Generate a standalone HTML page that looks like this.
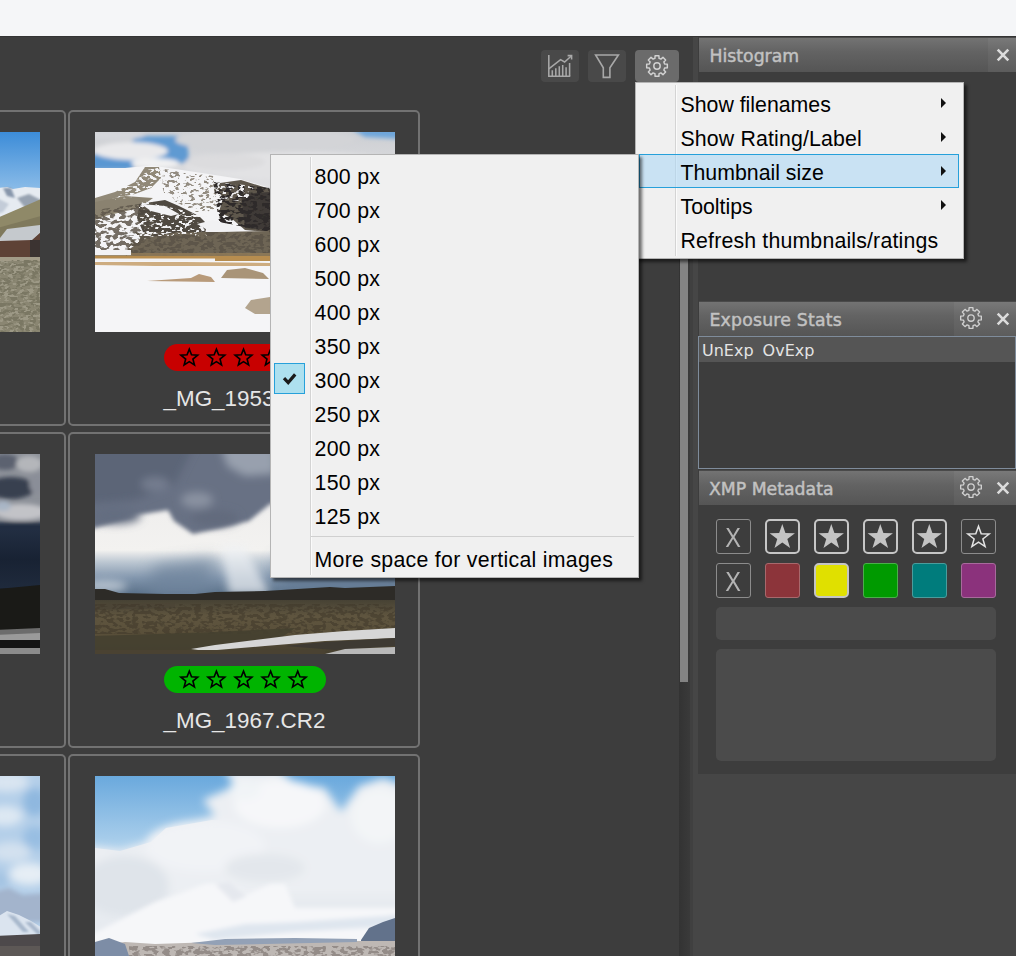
<!DOCTYPE html><html><head><meta charset="utf-8"><title>Thumbnail grid</title><style>html,body{margin:0;padding:0}
body{width:1016px;height:956px;overflow:hidden;background:#3d3d3d;position:relative;font-family:"Liberation Sans",sans-serif}
.abs{position:absolute}
.topbar{left:0;top:0;width:1016px;height:36px;background:#f5f6f8}
.cell{position:absolute;width:348px;height:312px;border:2px solid #727272;border-radius:5px}
.photo{width:300px;height:200px;overflow:hidden}
.photo svg{display:block}
.fname{font-size:22.4px;line-height:26px;color:#e6e6e6;white-space:nowrap;width:164px;text-align:center}
.tbtn{height:32px;border-radius:4px;background:#494949}
.tbtn.on{background:#6b6b6b}
.pbody{background:#3d3d3d}
.phead{background:linear-gradient(180deg,#737373 0%,#636363 40%,#555 100%);border-top:1px solid #4a4a4a;box-sizing:border-box}
.ptitle{position:absolute;top:7.7px;font-family:"DejaVu Sans","Liberation Sans",sans-serif;font-size:17.3px;line-height:20px;color:#c2c2c2;-webkit-text-stroke:0.45px #c2c2c2;white-space:nowrap}
.listbox{box-sizing:border-box;border:1px solid #7f8c9b;background:#3d3d3d}
.lhead{height:24.5px;background:#555;font-family:"DejaVu Sans","Liberation Sans",sans-serif;font-size:16px;line-height:28.5px;color:#e4e4e4;padding-left:3px;overflow:hidden;white-space:nowrap}
.xbtn,.sbtn,.cbtn{width:35px;height:35px;box-sizing:border-box;border-radius:3px}
.xbtn{border:1px solid #8c8c8c;text-align:center}
.xbtn span{display:inline-block;font-size:27px;line-height:35px;color:#b4b4b4;transform:scaleX(0.87);position:relative;top:1px}
.sbtn{border:1px solid #8c8c8c}
.sbtn.sel{border:2px solid #c6c6c6;border-radius:5px}
.cbtn{border:1px solid #888}
.cbtn.csel{border:2px solid #c4c4c4;border-radius:5px}
.field{background:#4b4b4b;border-radius:5px}
.menu{background:#f0f0f0;box-shadow:inset 0 0 0 1px #b4b4b4,3px 3px 3px rgba(0,0,0,.55);font-size:21.3px;color:#000;box-sizing:border-box}
.menu .gutter{position:absolute;width:1px;background:#d4d4d4;border-right:1px solid #fbfbfb}
.menu .mi{position:absolute;line-height:34px;height:34px;white-space:nowrap}
.menu .hl{position:absolute;box-sizing:border-box;background:rgba(170,215,245,.55);border:1px solid #26a0da}
.menu .arr{position:absolute;width:0;height:0;border-left:5.5px solid #111;border-top:5px solid transparent;border-bottom:5px solid transparent}
.menu .chk{position:absolute;width:31px;height:31px;box-sizing:border-box;background:#ade0ef;border:1px solid #26a0da}
.menu .chk svg{position:absolute;left:-1px;top:-1px}
.menu .sep{position:absolute;height:1px;background:#d0d0d0}
.hseg{background:rgba(255,255,255,.045)}
</style></head><body>
<div class="abs topbar"></div><div class="abs" style="left:0;top:36px;width:1016px;height:1px;background:#343434"></div>
<div class="cell" style="left:-286px;top:110px"></div><div class="abs photo" style="left:-260px;top:132px"><svg width="300" height="200" viewBox="0 0 300 200"><defs>
<filter id="p11b1" x="-10%" y="-10%" width="120%" height="120%"><feGaussianBlur stdDeviation="1"/></filter>
<filter id="p11b2" x="-10%" y="-10%" width="120%" height="120%"><feGaussianBlur stdDeviation="2.2"/></filter>
<filter id="p11b4" x="-20%" y="-20%" width="140%" height="140%"><feGaussianBlur stdDeviation="4"/></filter>
<filter id="p11b8" x="-30%" y="-30%" width="160%" height="160%"><feGaussianBlur stdDeviation="8"/></filter>

<filter id="p11sp" x="0" y="0" width="300" height="200" filterUnits="userSpaceOnUse"><feTurbulence type="fractalNoise" baseFrequency="0.16 0.28" numOctaves="2" seed="4" result="n"/><feColorMatrix in="n" type="matrix" values="0 0 0 0 0  0 0 0 0 0  0 0 0 0 0  0 0 0 11 -5.1" result="m"/><feComposite in="SourceGraphic" in2="m" operator="in"/></filter>
<filter id="p11sp2" x="0" y="0" width="300" height="200" filterUnits="userSpaceOnUse"><feTurbulence type="fractalNoise" baseFrequency="0.2 0.35" numOctaves="2" seed="11" result="n"/><feColorMatrix in="n" type="matrix" values="0 0 0 0 0  0 0 0 0 0  0 0 0 0 0  0 0 0 11 -5.9" result="m"/><feComposite in="SourceGraphic" in2="m" operator="in"/></filter>
<filter id="p11tx" x="0" y="0" width="300" height="200" filterUnits="userSpaceOnUse"><feTurbulence type="fractalNoise" baseFrequency="0.25" numOctaves="2" seed="7" result="n"/><feColorMatrix in="n" type="matrix" values="0 0 0 0 0  0 0 0 0 0  0 0 0 0 0  0 0 0 6 -2.7" result="m"/><feComposite in="SourceGraphic" in2="m" operator="in"/></filter>
<linearGradient id="p11s11" x1="0" y1="0" x2="0" y2="1"><stop offset="0" stop-color="#3c8cd8"/><stop offset="1" stop-color="#8bbce8"/></linearGradient></defs>
<g transform="translate(259 0)">
<rect x="-2" width="44" height="200" fill="#8a8672"/>
<rect x="-2" width="44" height="58" fill="url(#p11s11)"/>
<path d="M-2 56 L8 55 L14 57 L26 55 L42 56 L42 90 L-2 90Z" fill="#e6ebf1"/>
<g filter="url(#p11b1)">
 <path d="M4 56 L12 56 L16 66 L8 64Z" fill="#8796ab"/>
 <path d="M18 66 L30 62 L42 68 L42 76 L28 78Z" fill="#98a3b1"/>
 <path d="M-2 66 L10 72 L4 80 L-2 82Z" fill="#c3ccd8"/>
</g>
<path d="M-2 86 L42 67 L42 112 L-2 112Z" fill="#8f8968"/>
<path d="M-2 96 L42 84 L42 112 L-2 112Z" fill="#7f795c"/>
<path d="M-2 110 L8 97 L42 93 L42 100 L33 109 L-2 110Z" fill="#c5c9cd"/>
<path d="M-2 109 L33 108 L42 100 L42 127 L-2 127Z" fill="#5e4236"/>
<rect x="31" y="108" width="12" height="19" fill="#3b3331"/>
<rect x="-2" y="125" width="44" height="4" fill="#a39c88"/>
<rect x="-2" y="128" width="44" height="72" fill="#7a7763" filter="url(#p11sp)"/>
<rect x="-2" y="128" width="44" height="72" fill="#9d9986" filter="url(#p11sp2)"/>
</g>
</svg></div>
<div class="cell" style="left:68px;top:110px"></div><div class="abs photo" style="left:95px;top:132px"><svg width="300" height="200" viewBox="0 0 300 200"><defs>
<filter id="p12b1" x="-10%" y="-10%" width="120%" height="120%"><feGaussianBlur stdDeviation="1"/></filter>
<filter id="p12b2" x="-10%" y="-10%" width="120%" height="120%"><feGaussianBlur stdDeviation="2.2"/></filter>
<filter id="p12b4" x="-20%" y="-20%" width="140%" height="140%"><feGaussianBlur stdDeviation="4"/></filter>
<filter id="p12b8" x="-30%" y="-30%" width="160%" height="160%"><feGaussianBlur stdDeviation="8"/></filter>

<filter id="p12sp" x="0" y="0" width="100%" height="100%"><feTurbulence type="fractalNoise" baseFrequency="0.16 0.28" numOctaves="2" seed="4" result="n"/><feColorMatrix in="n" type="matrix" values="0 0 0 0 0  0 0 0 0 0  0 0 0 0 0  0 0 0 11 -5.1" result="m"/><feComposite in="SourceGraphic" in2="m" operator="in"/></filter>
<filter id="p12sp2" x="0" y="0" width="100%" height="100%"><feTurbulence type="fractalNoise" baseFrequency="0.2 0.35" numOctaves="2" seed="11" result="n"/><feColorMatrix in="n" type="matrix" values="0 0 0 0 0  0 0 0 0 0  0 0 0 0 0  0 0 0 11 -5.9" result="m"/><feComposite in="SourceGraphic" in2="m" operator="in"/></filter>
<filter id="p12tx" x="0" y="0" width="100%" height="100%"><feTurbulence type="fractalNoise" baseFrequency="0.25" numOctaves="2" seed="7" result="n"/><feColorMatrix in="n" type="matrix" values="0 0 0 0 0  0 0 0 0 0  0 0 0 0 0  0 0 0 6 -2.7" result="m"/><feComposite in="SourceGraphic" in2="m" operator="in"/></filter>
<linearGradient id="p12s12" x1="0" y1="0" x2="0" y2="1"><stop offset="0" stop-color="#cdcfd3"/><stop offset=".3" stop-color="#e2e2e4"/></linearGradient></defs>
<rect width="300" height="200" fill="url(#p12s12)"/>
<g filter="url(#p12b2)">
 <path d="M40 4 L92 4 L94 30 L70 33 L36 30 L-4 36 L-4 22 L30 24Z" fill="#5f9ad2"/>
 <path d="M-4 24 L40 25 L38 38 L-4 38Z" fill="#5a97d2"/>
 <path d="M255 -4 L305 -4 L305 7 L270 5Z" fill="#6ea6da"/>
 <ellipse cx="36" cy="19" rx="37" ry="9" fill="#e9e9eb"/>
 <ellipse cx="60" cy="31" rx="24" ry="5" fill="#f1f1f2"/>
 <ellipse cx="18" cy="3" rx="32" ry="5" fill="#d5d7db"/>
 <ellipse cx="170" cy="8" rx="90" ry="12" fill="#d3d4d7"/>
 <ellipse cx="200" cy="34" rx="110" ry="14" fill="#e2e2e4"/>
 <ellipse cx="130" cy="30" rx="40" ry="8" fill="#dcdcde"/>
</g>
<path d="M0 36 L30 36 L57 33.5 L80 37 L107 41 L145 47 L162 52 L175 56 L200 62 L230 60 L300 70 L300 130 L0 130Z" fill="#f4f4f6"/>
<path d="M50 35 L64 35 L66 46 L56 56 L40 62 L20 66 L0 72 L0 66 L20 60 L40 50Z" fill="#918978"/>
<path d="M0 70 L30 64 L58 66 L44 76 L10 84 L0 88Z" fill="#8a8270"/>
<path d="M118 52 L146 48 L175 57 L300 72 L300 126 L175 100 L150 98 L136 86 L124 80 L128 66Z" fill="#5e574c"/>
<path d="M146 62 L175 60 L300 76 L300 100 L175 98 L150 96Z" fill="#3f3a37"/>
<path d="M44 72 L70 68 L84 74 L104 84 L112 92 L110 102 L84 100 L62 106 L48 100 L42 86Z" fill="#4f4941"/>
<path d="M51 106 L84 100 L120 100 L175 99 L300 104 L300 128 L40 126 L30 120Z" fill="#6e6555"/>
<g filter="url(#p12sp)">
 <path d="M0 78 L58 70 L60 118 L0 118Z" fill="#5d564a" opacity=".85"/>
 <path d="M118 50 L175 56 L175 100 L124 90Z" fill="#2f2b29"/>
 <path d="M40 100 L300 100 L300 128 L30 126Z" fill="#5d5548"/>
</g>
<g filter="url(#p12sp2)">
 <path d="M62 36 L118 44 L124 80 L100 80 L70 64Z" fill="#7a7264" opacity=".8"/>
</g>
<g filter="url(#p12sp2)">
 <path d="M44 68 L112 84 L112 104 L44 104Z" fill="#f2f2f4"/>
 <path d="M30 36 L70 36 L66 60 L20 68Z" fill="#f4f4f6"/>
 <path d="M118 50 L160 54 L150 70 L124 66Z" fill="#eeeef0"/>
</g>
<path d="M102 92 L118 88 L143 96 L142 99 L116 100Z" fill="#f1f1f3"/>
<path d="M46 72 L70 74 L84 82 L76 84 L56 79Z" fill="#f3f3f5"/>
<rect x="0" y="121" width="300" height="3" fill="#8f7a58" opacity=".85"/>
<rect x="0" y="124" width="300" height="5" fill="#b78d4f"/>
<rect x="0" y="118" width="36" height="5" fill="#f2f2f4"/>
<rect x="0" y="129" width="300" height="71" fill="#f5f5f7"/>
<rect x="0" y="126.5" width="120" height="2.5" fill="#f2f2f4"/>
<path d="M0 130 L90 130 L175 131 L175 134 L60 134 L0 133Z" fill="#c39a62" opacity=".8"/>
<path d="M126 146 L132 138 L150 136 L168 141 L174 147Z" fill="#a99478"/>
<path d="M52 149 L96 146 L104 142 L116 145 L120 150Z" fill="#b89a7a"/>
<path d="M150 176 L156 168 L175 165 L300 168 L300 182 L160 182Z" fill="#b3a48e"/>
</svg></div><svg class="abs" style="left:163.5px;top:344px" width="162" height="27" viewBox="0 0 162 27"><rect width="162" height="27" rx="13.5" fill="#c80000"/><g fill="none" stroke="#000" stroke-width="1.6" stroke-linejoin="miter"><path d="M25.30 5.10 L27.53 10.83 L33.67 11.18 L28.91 15.07 L30.47 21.02 L25.30 17.70 L20.13 21.02 L21.69 15.07 L16.93 11.18 L23.07 10.83 Z"/><path d="M52.40 5.10 L54.63 10.83 L60.77 11.18 L56.01 15.07 L57.57 21.02 L52.40 17.70 L47.23 21.02 L48.79 15.07 L44.03 11.18 L50.17 10.83 Z"/><path d="M79.50 5.10 L81.73 10.83 L87.87 11.18 L83.11 15.07 L84.67 21.02 L79.50 17.70 L74.33 21.02 L75.89 15.07 L71.13 11.18 L77.27 10.83 Z"/><path d="M106.60 5.10 L108.83 10.83 L114.97 11.18 L110.21 15.07 L111.77 21.02 L106.60 17.70 L101.43 21.02 L102.99 15.07 L98.23 11.18 L104.37 10.83 Z"/><path d="M133.70 5.10 L135.93 10.83 L142.07 11.18 L137.31 15.07 L138.87 21.02 L133.70 17.70 L128.53 21.02 L130.09 15.07 L125.33 11.18 L131.47 10.83 Z"/></g></svg><div class="abs fname" style="left:162.5px;top:385.5px">_MG_1953.CR2</div>
<div class="cell" style="left:-286px;top:432px"></div><div class="abs photo" style="left:-260px;top:454px"><svg width="300" height="200" viewBox="0 0 300 200"><defs>
<filter id="p21b1" x="-10%" y="-10%" width="120%" height="120%"><feGaussianBlur stdDeviation="1"/></filter>
<filter id="p21b2" x="-10%" y="-10%" width="120%" height="120%"><feGaussianBlur stdDeviation="2.2"/></filter>
<filter id="p21b4" x="-20%" y="-20%" width="140%" height="140%"><feGaussianBlur stdDeviation="4"/></filter>
<filter id="p21b8" x="-30%" y="-30%" width="160%" height="160%"><feGaussianBlur stdDeviation="8"/></filter>
<linearGradient id="p21d21" x1="0" y1="0" x2="0" y2="1"><stop offset="0" stop-color="#222e42"/><stop offset=".5" stop-color="#182233"/><stop offset="1" stop-color="#1f2a3c"/></linearGradient></defs>
<g transform="translate(259 0)">
<rect x="-2" width="44" height="200" fill="#1b2535"/>
<rect x="-2" y="0" width="44" height="72" fill="#8d9199"/>
<g filter="url(#p21b2)">
 <ellipse cx="6" cy="8" rx="14" ry="8" fill="#5b6270"/>
 <ellipse cx="30" cy="10" rx="13" ry="8" fill="#b4b6ba"/>
 <ellipse cx="12" cy="34" rx="24" ry="11" fill="#39414f"/>
 <ellipse cx="38" cy="30" rx="8" ry="10" fill="#8a8e98"/>
 <ellipse cx="22" cy="58" rx="26" ry="8" fill="#c2c3c7"/>
 <ellipse cx="4" cy="52" rx="8" ry="5" fill="#a9b6c6"/>
 <rect x="-4" y="68" width="50" height="12" fill="#232f43"/>
</g>
<rect x="-2" y="76" width="44" height="58" fill="url(#p21d21)"/>
<path d="M-2 135 L20 133 L42 131 L42 178 L-2 178Z" fill="#1a1a17"/>
<rect x="-2" y="176" width="44" height="10" fill="#9a9a9a"/>
<path d="M-2 176 L42 174 L42 179 L-2 181Z" fill="#6c6c6c"/>
<rect x="-2" y="186" width="44" height="8" fill="#151515"/>
<rect x="-2" y="194" width="44" height="6" fill="#8c8c8c"/>
</g>
</svg></div>
<div class="cell" style="left:68px;top:432px"></div><div class="abs photo" style="left:95px;top:454px"><svg width="300" height="200" viewBox="0 0 300 200"><defs>
<filter id="p22b1" x="-10%" y="-10%" width="120%" height="120%"><feGaussianBlur stdDeviation="1"/></filter>
<filter id="p22b2" x="-10%" y="-10%" width="120%" height="120%"><feGaussianBlur stdDeviation="2.2"/></filter>
<filter id="p22b4" x="-20%" y="-20%" width="140%" height="140%"><feGaussianBlur stdDeviation="4"/></filter>
<filter id="p22b8" x="-30%" y="-30%" width="160%" height="160%"><feGaussianBlur stdDeviation="8"/></filter>

<filter id="p22sp" x="0" y="0" width="100%" height="100%"><feTurbulence type="fractalNoise" baseFrequency="0.16 0.28" numOctaves="2" seed="4" result="n"/><feColorMatrix in="n" type="matrix" values="0 0 0 0 0  0 0 0 0 0  0 0 0 0 0  0 0 0 11 -5.1" result="m"/><feComposite in="SourceGraphic" in2="m" operator="in"/></filter>
<filter id="p22sp2" x="0" y="0" width="100%" height="100%"><feTurbulence type="fractalNoise" baseFrequency="0.2 0.35" numOctaves="2" seed="11" result="n"/><feColorMatrix in="n" type="matrix" values="0 0 0 0 0  0 0 0 0 0  0 0 0 0 0  0 0 0 11 -5.9" result="m"/><feComposite in="SourceGraphic" in2="m" operator="in"/></filter>
<filter id="p22tx" x="0" y="0" width="100%" height="100%"><feTurbulence type="fractalNoise" baseFrequency="0.25" numOctaves="2" seed="7" result="n"/><feColorMatrix in="n" type="matrix" values="0 0 0 0 0  0 0 0 0 0  0 0 0 0 0  0 0 0 6 -2.7" result="m"/><feComposite in="SourceGraphic" in2="m" operator="in"/></filter>
<linearGradient id="p22s22" x1="0" y1="0" x2="0" y2="1"><stop offset="0" stop-color="#d8dadd"/><stop offset=".3" stop-color="#f0efee"/><stop offset=".48" stop-color="#f3f2f0"/><stop offset=".54" stop-color="#bcc7d2"/><stop offset=".62" stop-color="#8296ad"/><stop offset=".7" stop-color="#5a7088"/><stop offset="1" stop-color="#5a7088"/></linearGradient>
<linearGradient id="p22g22" x1="0" y1="0" x2="0" y2="1"><stop offset="0" stop-color="#474234"/><stop offset=".3" stop-color="#5f553f"/><stop offset=".6" stop-color="#5a503a"/><stop offset="1" stop-color="#453f2f"/></linearGradient></defs>
<rect width="300" height="200" fill="url(#p22s22)"/>
<g filter="url(#p22b8)" opacity=".75">
 <path d="M60 112 L120 104 L112 146 L50 146Z" fill="#6f849c"/>
 <path d="M180 104 L310 100 L310 146 L190 146Z" fill="#647a94"/>
</g>
<g filter="url(#p22b4)" opacity=".7">
 <path d="M126 92 L150 92 L175 140 L134 140Z" fill="#eef1f4"/>
 <ellipse cx="10" cy="132" rx="22" ry="6" fill="#d3dbe3"/>
</g>
<g filter="url(#p22b2)">
 <path d="M-10 -10 H310 V30 L175 50 L154 67 L126 74 L98 80 L79 67 L73 56 L42 61 L0 74 L-10 76Z" fill="#687184"/>
</g>
<g filter="url(#p22b4)">
 <path d="M-10 -10 H100 L80 30 L40 46 L-10 50Z" fill="#5c6577"/>
 <ellipse cx="102" cy="46" rx="16" ry="8" fill="#8a92a1"/>
 <ellipse cx="60" cy="30" rx="14" ry="7" fill="#747d8f"/>
 <path d="M126 -8 L180 -8 L180 20 L150 22 L132 12Z" fill="#98a0ae"/>
 <ellipse cx="120" cy="64" rx="24" ry="8" fill="#626b7d"/>
 <ellipse cx="20" cy="62" rx="26" ry="8" fill="#646d80"/>
</g>
<path d="M0 135 L10 135 L24 139 L70 140 L100 140 L120 138 L170 137 L235 133 L250 134 L300 132 L300 150 L0 150Z" fill="#2d2b27"/>
<rect y="146" width="300" height="54" fill="url(#p22g22)"/>
<path d="M0 150 L80 149 L80 154 L0 156Z" fill="#4c4536"/>
<rect y="150" width="300" height="30" fill="#3f392c" filter="url(#p22sp)" opacity=".55"/>
<path d="M0 182 L120 178 L200 174 L180 188 L90 196 L0 200Z" fill="#454030" opacity=".9"/>
<path d="M300 174 L250 177 L200 181 L160 186 L120 191 L96 195 L110 197 L170 192 L230 187 L300 184Z" fill="#d6d6d6"/>
<path d="M300 184 L230 188 L190 192 L240 196 L300 192Z" fill="#3e3a33"/>
<path d="M300 193 L250 195 L230 200 L300 200Z" fill="#b9b9b9"/>
<rect y="196" width="230" height="4" fill="#4a4232"/>
</svg></div><svg class="abs" style="left:163.5px;top:666px" width="162" height="27" viewBox="0 0 162 27"><rect width="162" height="27" rx="13.5" fill="#00b400"/><g fill="none" stroke="#000" stroke-width="1.6" stroke-linejoin="miter"><path d="M25.30 5.10 L27.53 10.83 L33.67 11.18 L28.91 15.07 L30.47 21.02 L25.30 17.70 L20.13 21.02 L21.69 15.07 L16.93 11.18 L23.07 10.83 Z"/><path d="M52.40 5.10 L54.63 10.83 L60.77 11.18 L56.01 15.07 L57.57 21.02 L52.40 17.70 L47.23 21.02 L48.79 15.07 L44.03 11.18 L50.17 10.83 Z"/><path d="M79.50 5.10 L81.73 10.83 L87.87 11.18 L83.11 15.07 L84.67 21.02 L79.50 17.70 L74.33 21.02 L75.89 15.07 L71.13 11.18 L77.27 10.83 Z"/><path d="M106.60 5.10 L108.83 10.83 L114.97 11.18 L110.21 15.07 L111.77 21.02 L106.60 17.70 L101.43 21.02 L102.99 15.07 L98.23 11.18 L104.37 10.83 Z"/><path d="M133.70 5.10 L135.93 10.83 L142.07 11.18 L137.31 15.07 L138.87 21.02 L133.70 17.70 L128.53 21.02 L130.09 15.07 L125.33 11.18 L131.47 10.83 Z"/></g></svg><div class="abs fname" style="left:162.5px;top:707.5px">_MG_1967.CR2</div>
<div class="cell" style="left:-286px;top:754px"></div><div class="abs photo" style="left:-260px;top:776px"><svg width="300" height="200" viewBox="0 0 300 200"><defs>
<filter id="p31b1" x="-10%" y="-10%" width="120%" height="120%"><feGaussianBlur stdDeviation="1"/></filter>
<filter id="p31b2" x="-10%" y="-10%" width="120%" height="120%"><feGaussianBlur stdDeviation="2.2"/></filter>
<filter id="p31b4" x="-20%" y="-20%" width="140%" height="140%"><feGaussianBlur stdDeviation="4"/></filter>
<filter id="p31b8" x="-30%" y="-30%" width="160%" height="160%"><feGaussianBlur stdDeviation="8"/></filter>
</defs>
<g transform="translate(259 0)">
<rect x="-2" width="44" height="200" fill="#b4cfe9"/>
<g filter="url(#p31b4)">
 <ellipse cx="8" cy="6" rx="22" ry="10" fill="#d9e5f1"/>
 <ellipse cx="36" cy="26" rx="12" ry="14" fill="#8fb8df"/>
 <ellipse cx="6" cy="40" rx="18" ry="10" fill="#dde8f3"/>
 <ellipse cx="36" cy="62" rx="12" ry="12" fill="#98bee2"/>
 <ellipse cx="12" cy="76" rx="20" ry="10" fill="#d3e1ef"/>
 <ellipse cx="30" cy="98" rx="20" ry="11" fill="#e6eef5"/>
 <ellipse cx="2" cy="104" rx="8" ry="9" fill="#a3c3e2"/>
</g>
<g filter="url(#p31b2)">
 <path d="M-6 116 L10 112 L24 119 L48 117 L48 146 L-6 146Z" fill="#a3b4cc"/>
</g>
<path d="M-2 141 L8 135 L20 139 L32 145 L42 151 L42 162 L-2 162Z" fill="#dbe4ef"/>
<g filter="url(#p31b1)"><path d="M8 138 L24 156 L30 156 L16 140Z M26 146 L40 160 L42 156 L32 146Z" fill="#a8b8cc"/></g>
<path d="M-2 160 L42 158 L42 200 L-2 200Z" fill="#4d494b"/>
<rect x="-2" y="170" width="44" height="10" fill="#5d5856"/>
</g>
</svg></div>
<div class="cell" style="left:68px;top:754px"></div><div class="abs photo" style="left:95px;top:776px"><svg width="300" height="200" viewBox="0 0 300 200"><defs>
<filter id="p32b1" x="-10%" y="-10%" width="120%" height="120%"><feGaussianBlur stdDeviation="1"/></filter>
<filter id="p32b2" x="-10%" y="-10%" width="120%" height="120%"><feGaussianBlur stdDeviation="2.2"/></filter>
<filter id="p32b4" x="-20%" y="-20%" width="140%" height="140%"><feGaussianBlur stdDeviation="4"/></filter>
<filter id="p32b8" x="-30%" y="-30%" width="160%" height="160%"><feGaussianBlur stdDeviation="8"/></filter>

<filter id="p32sp" x="0" y="0" width="100%" height="100%"><feTurbulence type="fractalNoise" baseFrequency="0.16 0.28" numOctaves="2" seed="4" result="n"/><feColorMatrix in="n" type="matrix" values="0 0 0 0 0  0 0 0 0 0  0 0 0 0 0  0 0 0 11 -5.1" result="m"/><feComposite in="SourceGraphic" in2="m" operator="in"/></filter>
<filter id="p32sp2" x="0" y="0" width="100%" height="100%"><feTurbulence type="fractalNoise" baseFrequency="0.2 0.35" numOctaves="2" seed="11" result="n"/><feColorMatrix in="n" type="matrix" values="0 0 0 0 0  0 0 0 0 0  0 0 0 0 0  0 0 0 11 -5.9" result="m"/><feComposite in="SourceGraphic" in2="m" operator="in"/></filter>
<filter id="p32tx" x="0" y="0" width="100%" height="100%"><feTurbulence type="fractalNoise" baseFrequency="0.25" numOctaves="2" seed="7" result="n"/><feColorMatrix in="n" type="matrix" values="0 0 0 0 0  0 0 0 0 0  0 0 0 0 0  0 0 0 6 -2.7" result="m"/><feComposite in="SourceGraphic" in2="m" operator="in"/></filter>
<linearGradient id="p32s32" x1="0" y1="0" x2="0" y2="1"><stop offset="0" stop-color="#6aa9dd"/><stop offset="1" stop-color="#b2d3ed"/></linearGradient></defs>
<rect width="300" height="200" fill="#e7ebf0"/>
<path d="M0 0 H300 V50 L117 44 L71 52 L56 66 L25 75 L0 72Z" fill="url(#p32s32)"/>
<g filter="url(#p32b4)">
 <path d="M129 -6 L140 10 L108 24 L120 40 L75 50 L58 64 L26 74 L-8 70 L-8 120 L310 120 L310 10 L288 2 L264 10 L246 36 L230 12 L200 7 L184 -6Z" fill="#eceff3"/>
 <ellipse cx="185" cy="28" rx="46" ry="24" fill="#f6f7f9"/>
 <ellipse cx="284" cy="40" rx="28" ry="28" fill="#f3f5f7"/>
 <ellipse cx="150" cy="14" rx="16" ry="10" fill="#f1f4f7"/>
 <ellipse cx="110" cy="70" rx="60" ry="26" fill="#f1f3f6"/>
 <ellipse cx="30" cy="110" rx="44" ry="30" fill="#dfe4ea"/>
 <ellipse cx="170" cy="92" rx="40" ry="14" fill="#e3e7ec"/>
</g>
<g filter="url(#p32b2)">
 <path d="M-6 160 L60 126 L110 108 L134 106 L152 118 L176 108 L190 108 L200 132 L306 132 L306 172 L-6 172Z" fill="#f6f7f9"/>
 <path d="M120 108 L134 106 L152 120 L138 126Z" fill="#e5e8ee"/>
 <path d="M100 158 L150 148 L200 146 L290 140 L306 138 L306 150 L200 156 L120 164Z" fill="#dfe6ef"/>
</g>
<path d="M266 164 L274 152 L288 146 L300 142 L300 166 L266 166Z" fill="#62728b"/>
<path d="M0 170 L30 166 L60 168 L120 166 L200 165 L300 165 L300 200 L0 200Z" fill="#beb8b4"/>
<path d="M0 166 L14 162 L30 168 L34 180 L0 180Z" fill="#7d8da6"/>
<path d="M96 167 L130 163 L200 162 L262 163 L262 166 L120 169Z" fill="#93a1b6"/>
<rect x="34" y="170" width="266" height="10" fill="#948c88" filter="url(#p32sp)"/>
</svg></div>
<div class="abs tbtn" style="left:541px;top:50px;width:38px"></div>
<div class="abs tbtn" style="left:588px;top:50px;width:38px"></div>
<div class="abs tbtn on" style="left:635px;top:50px;width:44px"></div>
<svg class="abs" style="left:541px;top:50px" width="38" height="32" viewBox="541 50 38 32" fill="none" stroke="#a8a8a8" stroke-width="1.55">
<path d="M548.8 55V76.3H570.3"/>
<path d="M552.3 76V70.2M555.8 76V68.2M559.3 76V66.2M562.7 76V65M566.1 76V67.2M569.6 76V63"/>
<path d="M548.8 68.8L560.6 59.7L564.6 62L571 56.2"/>
<path d="M567.6 55.6H571.6V59.6"/>
</svg>
<svg class="abs" style="left:588px;top:50px" width="38" height="32" viewBox="588 50 38 32" fill="none" stroke="#a8a8a8" stroke-width="1.6" stroke-linejoin="miter">
<path d="M595.6 55H618.4L609.9 67.8V77.4H603.3V67.8Z"/>
</svg>
<svg class="abs" style="left:644.2px;top:53.0px" width="26" height="26" viewBox="-13.0 -13.0 26 26"><path d="M-2.08 -7.62 L-1.89 -10.33 L1.89 -10.33 L2.08 -7.62 L3.91 -6.86 L5.97 -8.64 L8.64 -5.97 L6.86 -3.91 L7.62 -2.08 L10.33 -1.89 L10.33 1.89 L7.62 2.08 L6.86 3.91 L8.64 5.97 L5.97 8.64 L3.91 6.86 L2.08 7.62 L1.89 10.33 L-1.89 10.33 L-2.08 7.62 L-3.91 6.86 L-5.97 8.64 L-8.64 5.97 L-6.86 3.91 L-7.62 2.08 L-10.33 1.89 L-10.33 -1.89 L-7.62 -2.08 L-6.86 -3.91 L-8.64 -5.97 L-5.97 -8.64 L-3.91 -6.86 Z" fill="none" stroke="#d2d2d2" stroke-width="1.45" stroke-linejoin="round"/><circle cx="0" cy="0" r="3.2" fill="none" stroke="#d2d2d2" stroke-width="1.45"/></svg>
<div class="abs" style="left:679px;top:100px;width:11px;height:856px;background:linear-gradient(90deg,#333,#3a3a3a)"></div>
<div class="abs" style="left:680px;top:84px;width:8px;height:598px;background:#838383"></div>
<div class="abs" style="left:690px;top:100px;width:3px;height:856px;background:#404040"></div>
<div class="abs" style="left:693px;top:37px;width:323px;height:919px;background:#464646"></div>
<div class="abs pbody" style="left:698px;top:37px;width:318px;height:263px"></div>
<div class="abs phead" style="left:699px;top:37px;width:317px;height:35px"><span class="ptitle" style="left:10.5px">Histogram</span></div>
<div class="abs hseg" style="left:988px;top:38px;width:28px;height:34px"></div>
<svg class="abs" style="left:994.5px;top:47px" width="16" height="16" viewBox="-8 -8 16 16"><path d="M-5.3 -5.3L5.3 5.3M5.3 -5.3L-5.3 5.3" stroke="#dcdcdc" stroke-width="2.6" stroke-linecap="butt" fill="none"/></svg>
<div class="abs pbody" style="left:698px;top:300px;width:318px;height:170px"></div>
<div class="abs phead" style="left:699px;top:301px;width:317px;height:35px"><span class="ptitle" style="left:10.5px;letter-spacing:0.2px">Exposure Stats</span></div>
<div class="abs hseg" style="left:954px;top:302px;width:62px;height:34px"></div>
<svg class="abs" style="left:958.0px;top:305.0px" width="26" height="26" viewBox="-13.0 -13.0 26 26"><path d="M-2.08 -7.62 L-1.89 -10.33 L1.89 -10.33 L2.08 -7.62 L3.91 -6.86 L5.97 -8.64 L8.64 -5.97 L6.86 -3.91 L7.62 -2.08 L10.33 -1.89 L10.33 1.89 L7.62 2.08 L6.86 3.91 L8.64 5.97 L5.97 8.64 L3.91 6.86 L2.08 7.62 L1.89 10.33 L-1.89 10.33 L-2.08 7.62 L-3.91 6.86 L-5.97 8.64 L-8.64 5.97 L-6.86 3.91 L-7.62 2.08 L-10.33 1.89 L-10.33 -1.89 L-7.62 -2.08 L-6.86 -3.91 L-8.64 -5.97 L-5.97 -8.64 L-3.91 -6.86 Z" fill="none" stroke="#d0d0d0" stroke-width="1.35" stroke-linejoin="round"/><circle cx="0" cy="0" r="3.2" fill="none" stroke="#d0d0d0" stroke-width="1.35"/></svg>
<svg class="abs" style="left:994.5px;top:311px" width="16" height="16" viewBox="-8 -8 16 16"><path d="M-5.3 -5.3L5.3 5.3M5.3 -5.3L-5.3 5.3" stroke="#dcdcdc" stroke-width="2.6" stroke-linecap="butt" fill="none"/></svg>
<div class="abs listbox" style="left:698px;top:336px;width:318px;height:133px"><div class="lhead"><span>UnExp</span><span style="margin-left:9px">OvExp</span></div></div>
<div class="abs pbody" style="left:698px;top:470px;width:318px;height:304px"></div>
<div class="abs phead" style="left:699px;top:470px;width:317px;height:35px"><span class="ptitle" style="left:10px">XMP Metadata</span></div>
<div class="abs hseg" style="left:954px;top:471px;width:62px;height:34px"></div>
<svg class="abs" style="left:958.0px;top:474.0px" width="26" height="26" viewBox="-13.0 -13.0 26 26"><path d="M-2.08 -7.62 L-1.89 -10.33 L1.89 -10.33 L2.08 -7.62 L3.91 -6.86 L5.97 -8.64 L8.64 -5.97 L6.86 -3.91 L7.62 -2.08 L10.33 -1.89 L10.33 1.89 L7.62 2.08 L6.86 3.91 L8.64 5.97 L5.97 8.64 L3.91 6.86 L2.08 7.62 L1.89 10.33 L-1.89 10.33 L-2.08 7.62 L-3.91 6.86 L-5.97 8.64 L-8.64 5.97 L-6.86 3.91 L-7.62 2.08 L-10.33 1.89 L-10.33 -1.89 L-7.62 -2.08 L-6.86 -3.91 L-8.64 -5.97 L-5.97 -8.64 L-3.91 -6.86 Z" fill="none" stroke="#d0d0d0" stroke-width="1.35" stroke-linejoin="round"/><circle cx="0" cy="0" r="3.2" fill="none" stroke="#d0d0d0" stroke-width="1.35"/></svg>
<svg class="abs" style="left:994.5px;top:480px" width="16" height="16" viewBox="-8 -8 16 16"><path d="M-5.3 -5.3L5.3 5.3M5.3 -5.3L-5.3 5.3" stroke="#dcdcdc" stroke-width="2.6" stroke-linecap="butt" fill="none"/></svg>
<div class="abs xbtn" style="left:716px;top:519px"><span>X</span></div>
<div class="abs sbtn sel" style="left:765px;top:519px"></div>
<svg class="abs" style="left:765px;top:519px" width="35" height="35" viewBox="0 0 35 35"><path d="M17.30 5.00 L20.42 14.01 L29.95 14.19 L22.34 19.94 L25.12 29.06 L17.30 23.60 L9.48 29.06 L12.26 19.94 L4.65 14.19 L14.18 14.01 Z" fill="#c4c4c4"/></svg>
<div class="abs sbtn sel" style="left:814px;top:519px"></div>
<svg class="abs" style="left:814px;top:519px" width="35" height="35" viewBox="0 0 35 35"><path d="M17.30 5.00 L20.42 14.01 L29.95 14.19 L22.34 19.94 L25.12 29.06 L17.30 23.60 L9.48 29.06 L12.26 19.94 L4.65 14.19 L14.18 14.01 Z" fill="#c4c4c4"/></svg>
<div class="abs sbtn sel" style="left:863px;top:519px"></div>
<svg class="abs" style="left:863px;top:519px" width="35" height="35" viewBox="0 0 35 35"><path d="M17.30 5.00 L20.42 14.01 L29.95 14.19 L22.34 19.94 L25.12 29.06 L17.30 23.60 L9.48 29.06 L12.26 19.94 L4.65 14.19 L14.18 14.01 Z" fill="#c4c4c4"/></svg>
<div class="abs sbtn sel" style="left:912px;top:519px"></div>
<svg class="abs" style="left:912px;top:519px" width="35" height="35" viewBox="0 0 35 35"><path d="M17.30 5.00 L20.42 14.01 L29.95 14.19 L22.34 19.94 L25.12 29.06 L17.30 23.60 L9.48 29.06 L12.26 19.94 L4.65 14.19 L14.18 14.01 Z" fill="#c4c4c4"/></svg>
<div class="abs sbtn" style="left:961px;top:519px"></div>
<svg class="abs" style="left:961px;top:519px" width="35" height="35" viewBox="0 0 35 35"><path d="M17.50 7.30 L20.20 14.78 L28.15 15.04 L21.87 19.92 L24.08 27.56 L17.50 23.10 L10.92 27.56 L13.13 19.92 L6.85 15.04 L14.80 14.78 Z" fill="none" stroke="#e4e4e4" stroke-width="1.5"/></svg>
<div class="abs xbtn" style="left:716px;top:563px"><span>X</span></div>
<div class="abs cbtn" style="left:765px;top:563px;background:#8c343a;border-color:#a8686c"></div>
<div class="abs cbtn csel" style="left:814px;top:563px;background:#e0e000;border-color:#c4c4c4"></div>
<div class="abs cbtn" style="left:863px;top:563px;background:#009a00;border-color:#4aae4a"></div>
<div class="abs cbtn" style="left:912px;top:563px;background:#007c7c;border-color:#4a9c9c"></div>
<div class="abs cbtn" style="left:961px;top:563px;background:#8b327c;border-color:#a86a9c"></div>
<div class="abs field" style="left:716px;top:607px;width:280px;height:33px"></div>
<div class="abs field" style="left:716px;top:649px;width:280px;height:112px"></div>
<div class="abs menu" style="left:635px;top:82px;width:328.5px;height:177px"><div class="gutter" style="left:40px;top:3px;bottom:3px"></div><div class="mi" style="left:45.5px;top:5.5px;letter-spacing:0px">Show filenames</div><div class="arr" style="left:305.5px;top:15.5px"></div><div class="mi" style="left:45.5px;top:39.5px;letter-spacing:0.15px">Show Rating/Label</div><div class="arr" style="left:305.5px;top:49.5px"></div><div class="hl" style="left:4px;top:72px;width:320px;height:34px"></div><div class="mi" style="left:45.5px;top:73.5px;letter-spacing:0px">Thumbnail size</div><div class="arr" style="left:305.5px;top:83.5px"></div><div class="mi" style="left:45.5px;top:107.5px;letter-spacing:0px">Tooltips</div><div class="arr" style="left:305.5px;top:117.5px"></div><div class="mi" style="left:45.5px;top:141.5px;letter-spacing:0.17px">Refresh thumbnails/ratings</div></div>
<div class="abs menu" style="left:270px;top:154px;width:368.5px;height:423.5px"><div class="gutter" style="left:40px;top:3px;bottom:3px"></div><div class="mi" style="left:44.5px;top:5.5px;letter-spacing:0.3px">800 px</div><div class="mi" style="left:44.5px;top:39.5px;letter-spacing:0.3px">700 px</div><div class="mi" style="left:44.5px;top:73.5px;letter-spacing:0.3px">600 px</div><div class="mi" style="left:44.5px;top:107.5px;letter-spacing:0.3px">500 px</div><div class="mi" style="left:44.5px;top:141.5px;letter-spacing:0.3px">400 px</div><div class="mi" style="left:44.5px;top:175.5px;letter-spacing:0.3px">350 px</div><div class="chk" style="left:4px;top:209.0px"><svg width="31" height="31" viewBox="0 0 31 31"><path d="M10 15.2L14.2 19.6L21.2 11.4" fill="none" stroke="#1a1a1a" stroke-width="3.2"/></svg></div><div class="mi" style="left:44.5px;top:209.5px;letter-spacing:0.3px">300 px</div><div class="mi" style="left:44.5px;top:243.5px;letter-spacing:0.3px">250 px</div><div class="mi" style="left:44.5px;top:277.5px;letter-spacing:0.3px">200 px</div><div class="mi" style="left:44.5px;top:311.5px;letter-spacing:0.3px">150 px</div><div class="mi" style="left:44.5px;top:345.5px;letter-spacing:0.3px">125 px</div><div class="sep" style="left:41px;top:382px;width:323px"></div><div class="mi" style="left:44.5px;top:389px;letter-spacing:0.29px">More space for vertical images</div></div>
</body></html>
